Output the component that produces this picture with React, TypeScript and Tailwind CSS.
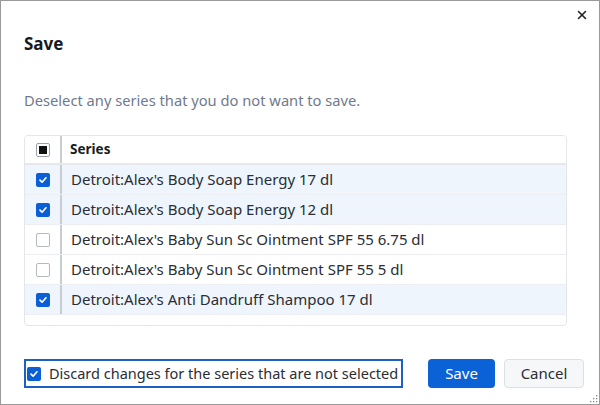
import React, { useState } from 'react';
import { X } from 'lucide-react';

const rows = [
  { name: "Detroit:Alex's Body Soap Energy 17 dl", checked: true },
  { name: "Detroit:Alex's Body Soap Energy 12 dl", checked: true },
  { name: "Detroit:Alex's Baby Sun Sc Ointment SPF 55 6.75 dl", checked: false },
  { name: "Detroit:Alex's Baby Sun Sc Ointment SPF 55 5 dl", checked: false },
  { name: "Detroit:Alex's Anti Dandruff Shampoo 17 dl", checked: true },
];

const Box: React.FC<{ checked: boolean; partial?: boolean }> = ({ checked, partial }) => {
  if (partial) {
    return (
      <span className="w-[14px] h-[14px] shrink-0 rounded-[2px] border border-[#9aa1ad] bg-white flex items-center justify-center">
        <span className="w-[8px] h-[8px] bg-[#111]" />
      </span>
    );
  }
  if (checked) {
    return (
      <span className="w-[14px] h-[14px] shrink-0 rounded-[2px] bg-[#0b5fd6] flex items-center justify-center">
        <svg width="10" height="10" viewBox="0 0 10 10" fill="none">
          <path d="M2 5.2 L4.1 7.2 L8 2.8" stroke="white" strokeWidth="1.7" strokeLinecap="round" strokeLinejoin="round" />
        </svg>
      </span>
    );
  }
  return <span className="w-[14px] h-[14px] shrink-0 rounded-[2px] border border-[#b4b9c2] bg-white" />;
};

export default function App() {
  const [items, setItems] = useState(rows);
  const [discard, setDiscard] = useState(true);

  return (
    <div className="w-[600px] h-[405px] bg-white border border-[#9a9a9a] relative font-['Noto_Sans',sans-serif] text-[#1f2329] overflow-hidden">
      <button className="absolute right-[10px] top-[7px] text-[#222]">
        <X className="w-[14px] h-[14px]" strokeWidth={2.6} />
      </button>

      <div className="pl-[23px] pr-[8px] pt-[31px] flex flex-col h-full">
        <h2 className="text-[17px] font-bold leading-[24px] text-[#161a1f]">Save</h2>

        <p className="mt-[34px] text-[14.7px] leading-[20px] text-[#707a8c]">
          Deselect any series that you do not want to save.
        </p>

        {/* Series table */}
        <div className="mt-[25px] w-[543px] h-[191px] border border-[#e3e6ea] rounded-[4px] flex flex-col overflow-hidden">
          <div className="flex h-[29px] shrink-0 border-b-2 border-[#e6e8ec] bg-white">
            <div className="w-[37px] flex items-center justify-center border-r-2 border-[#c8ccd3]">
              <Box checked={false} partial />
            </div>
            <div className="flex items-center pl-[8px] text-[13.5px] font-bold text-[#1a1d21]">Series</div>
          </div>
          {items.map((r, i) => (
            <div
              key={i}
              onClick={() => setItems(items.map((x, j) => (j === i ? { ...x, checked: !x.checked } : x)))}
              className={`flex h-[30px] shrink-0 border-b border-[#eceef1] ${r.checked ? 'bg-[#eef5fd]' : 'bg-white'}`}
            >
              <div className="w-[37px] flex items-center justify-center border-r-2 border-[#c8ccd3]">
                <Box checked={r.checked} />
              </div>
              <div className="flex items-center pl-[9px] text-[15px] text-[#2a2e34]">{r.name}</div>
            </div>
          ))}
        </div>

        {/* Footer */}
        <div className="mt-[33px] flex items-center">
          <label
            onClick={() => setDiscard(!discard)}
            className="w-[379px] h-[29px] shrink-0 border-2 border-[#1d5fc4] flex items-center gap-[8px] pl-[1px] text-[14.5px] text-[#2a2e34] whitespace-nowrap"
          >
            <Box checked={discard} />
            Discard changes for the series that are not selected
          </label>
          <button className="ml-[25px] w-[67px] h-[29px] shrink-0 rounded-[4px] bg-[#0b62d6] text-white text-[15px]">Save</button>
          <button className="ml-[9px] w-[80px] h-[29px] shrink-0 rounded-[4px] bg-[#f6f7f9] border border-[#dcdfe4] text-[15px] text-[#2a2e34]">
            Cancel
          </button>
        </div>
      </div>

      <svg className="absolute right-[1px] bottom-[1px]" width="8" height="8" viewBox="0 0 8 8">
        <rect x="6" y="0" width="1.3" height="1.3" fill="#888" />
        <rect x="3" y="3" width="1.3" height="1.3" fill="#888" />
        <rect x="6" y="3" width="1.3" height="1.3" fill="#888" />
        <rect x="0" y="6" width="1.3" height="1.3" fill="#888" />
        <rect x="3" y="6" width="1.3" height="1.3" fill="#888" />
        <rect x="6" y="6" width="1.3" height="1.3" fill="#888" />
      </svg>
    </div>
  );
}
